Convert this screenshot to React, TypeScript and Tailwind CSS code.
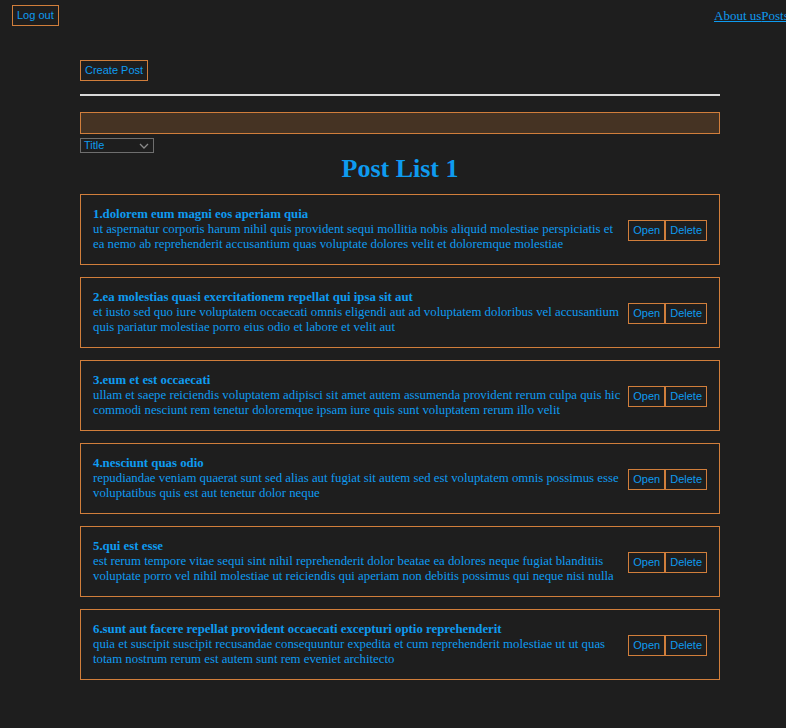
import { useState } from "react";

const posts = [
  {
    id: 1,
    title: "dolorem eum magni eos aperiam quia",
    body: "ut aspernatur corporis harum nihil quis provident sequi mollitia nobis aliquid molestiae perspiciatis et ea nemo ab reprehenderit accusantium quas voluptate dolores velit et doloremque molestiae",
  },
  {
    id: 2,
    title: "ea molestias quasi exercitationem repellat qui ipsa sit aut",
    body: "et iusto sed quo iure voluptatem occaecati omnis eligendi aut ad voluptatem doloribus vel accusantium quis pariatur molestiae porro eius odio et labore et velit aut",
  },
  {
    id: 3,
    title: "eum et est occaecati",
    body: "ullam et saepe reiciendis voluptatem adipisci sit amet autem assumenda provident rerum culpa quis hic commodi nesciunt rem tenetur doloremque ipsam iure quis sunt voluptatem rerum illo velit",
  },
  {
    id: 4,
    title: "nesciunt quas odio",
    body: "repudiandae veniam quaerat sunt sed alias aut fugiat sit autem sed est voluptatem omnis possimus esse voluptatibus quis est aut tenetur dolor neque",
  },
  {
    id: 5,
    title: "qui est esse",
    body: "est rerum tempore vitae sequi sint nihil reprehenderit dolor beatae ea dolores neque fugiat blanditiis voluptate porro vel nihil molestiae ut reiciendis qui aperiam non debitis possimus qui neque nisi nulla",
  },
  {
    id: 6,
    title: "sunt aut facere repellat provident occaecati excepturi optio reprehenderit",
    body: "quia et suscipit suscipit recusandae consequuntur expedita et cum reprehenderit molestiae ut ut quas totam nostrum rerum est autem sunt rem eveniet architecto",
  },
];

const btn =
  "block border border-[#d17e3b] text-[#0e9bf0] font-['Liberation_Sans',sans-serif] text-[11px] leading-[13px] px-[4px] py-[3px] bg-transparent";

export default function App() {
  const [query, setQuery] = useState("");

  return (
    <div className="min-h-[728px] w-full overflow-hidden bg-[#1e1e1e] text-[#0e9bf0] font-['Liberation_Serif',serif]">
      <nav className="flex items-start justify-between pl-3 pt-[5px] h-[35px]">
        <button className={btn}>Log out</button>
        <div className="w-[72px] whitespace-nowrap text-[13px] pt-[1px] flex">
          <a href="#" className="underline">About us</a>
          <a href="#" className="underline">Posts</a>
        </div>
      </nav>
      <main className="ml-[80px] w-[640px] pt-[25px] pb-12">
        <button className={btn}>Create Post</button>
        <hr className="mt-[13px] border-0 h-[2px] bg-[#d8d8d8]" />
        <input
          value={query}
          onChange={(e) => setQuery(e.target.value)}
          className="mt-[16px] block w-full h-[22px] border border-[#d17e3b] bg-[#453323] outline-none text-[#0e9bf0] px-1"
        />
        <div className="mt-[4px] w-[74px] h-[15px] border border-[#6e6e6e] flex items-center justify-between px-[3px] font-['Liberation_Sans',sans-serif] text-[11px]">
          <span>Title</span>
          <svg width="10" height="6" viewBox="0 0 10 6" className="mr-[1px]">
            <path d="M1 1l4 4 4-4" fill="none" stroke="#8a8a8a" strokeWidth="1.3" />
          </svg>
        </div>
        <h1 className="text-center text-[26px] font-bold leading-[30px] mt-[1px]">
          Post List 1
        </h1>
        <div className="mt-[10px] flex flex-col gap-[12px]">
          {posts.map((p) => (
            <div
              key={p.id}
              className="border border-[#d17e3b] h-[71px] px-[12px] flex items-center gap-[4px]"
            >
              <div className="flex-1 text-[12.8px] leading-[15px]">
                <strong>
                  {p.id}.{p.title}
                </strong>
                <div>{p.body}</div>
              </div>
              <div className="flex mt-[1px]">
                <button className={btn}>Open</button>
                <button className={btn}>Delete</button>
              </div>
            </div>
          ))}
        </div>
      </main>
    </div>
  );
}
